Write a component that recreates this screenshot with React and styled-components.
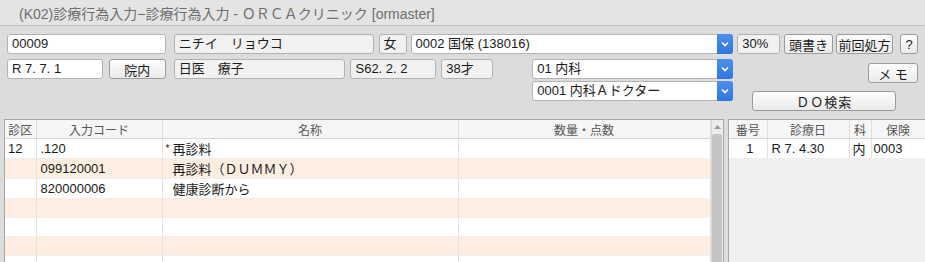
import React from 'react';
import styled, { createGlobalStyle } from 'styled-components';

const GlobalStyle = createGlobalStyle`
  html, body {
    margin: 0;
    padding: 0;
    background: #dcdcdc;
  }
  body {
    font-family: "Liberation Sans", "Noto Sans CJK JP", sans-serif;
    font-size: 13px;
    color: #1a1a1a;
  }
`;

const Window = styled.div`
  width: 925px;
  height: 262px;
  overflow: hidden;
  background: #dcdcdc;
  display: flex;
  flex-direction: column;
`;

const TitleBar = styled.div`
  height: 26px;
  box-sizing: border-box;
  background: #e4e4e4;
  border-bottom: 1px solid #c2c2c2;
  padding-left: 19px;
  display: flex;
  align-items: center;
  font-size: 14px;
  color: #6e6e6e;
  white-space: nowrap;
`;

const Form = styled.div`
  padding: 8px 7px 0 7px;
  display: flex;
  flex-direction: column;
`;

const Row = styled.div`
  display: flex;
  align-items: flex-start;
  gap: ${p => p.gap || 0}px;
`;

const Field = styled.div`
  box-sizing: border-box;
  width: ${p => p.w}px;
  height: 20px;
  margin-left: ${p => p.ml || 0}px;
  padding: 0 4px;
  line-height: 18px;
  background: ${p => (p.readonly ? '#f1f1f1' : '#ffffff')};
  border: 1px solid #b3b3b3;
  border-radius: 3px;
  white-space: nowrap;
  overflow: hidden;
`;

const Button = styled.div`
  box-sizing: border-box;
  width: ${p => p.w}px;
  height: ${p => p.h || 20}px;
  margin-left: ${p => p.ml || 0}px;
  margin-top: ${p => p.mt || 0}px;
  display: flex;
  align-items: center;
  justify-content: center;
  background: linear-gradient(#fdfdfd, #eaeaea);
  border: 1px solid #9c9c9c;
  border-radius: 3px;
  white-space: nowrap;
  letter-spacing: ${p => p.spacing || 0}px;
`;

const Select = styled.div`
  box-sizing: border-box;
  width: ${p => p.w}px;
  height: ${p => p.h || 20}px;
  margin-left: ${p => p.ml || 0}px;
  display: flex;
  background: #fff;
  border: 1px solid #b3b3b3;
  border-radius: 3px;
`;

const SelectText = styled.div`
  flex: 1;
  padding: 0 4px;
  line-height: ${p => p.lh || 18}px;
  white-space: nowrap;
  overflow: hidden;
`;

const SelectArrow = styled.div`
  width: 16px;
  margin: -1px -1px -1px 0;
  background: linear-gradient(#4b90ee, #2f76df);
  border-radius: 0 3px 3px 0;
  display: flex;
  align-items: center;
  justify-content: center;
`;

const SelectStack = styled.div`
  display: flex;
  flex-direction: column;
  gap: 2px;
  margin-left: ${p => p.ml || 0}px;
`;

const RightStack = styled.div`
  width: 166px;
  margin-left: 19px;
  display: flex;
  flex-direction: column;
  align-items: flex-end;
`;

const Tables = styled.div`
  margin-top: 8px;
  flex: 1;
  display: flex;
  gap: 4px;
  padding-left: 4px;
  min-height: 0;
`;

const Panel = styled.div`
  box-sizing: border-box;
  width: ${p => p.w}px;
  border: 1px solid #a6a6a6;
  border-bottom: none;
  border-right: ${p => (p.open ? 'none' : '1px solid #a6a6a6')};
  background: ${p => p.bg || '#fff'};
  display: flex;
  overflow: hidden;
`;

const Grid = styled.table`
  border-collapse: collapse;
  table-layout: fixed;
  width: ${p => p.w}px;
  align-self: flex-start;
`;

const Th = styled.th`
  height: 18px;
  padding: 0;
  font-weight: normal;
  font-size: 12px;
  color: #555;
  background: #f6f6f6;
  border-right: 1px solid #dedede;
  border-bottom: 1px solid #d6d6d6;
  text-align: center;
  white-space: nowrap;
`;

const Tr = styled.tr`
  background: ${p => (p.alt ? '#fdeee1' : '#ffffff')};
`;

const Td = styled.td`
  height: 18px;
  padding: 0 0 0 ${p => p.pl || 4}px;
  border-right: 1px solid #e2e2e2;
  border-bottom: 1px solid #eeeeee;
  text-align: ${p => p.align || 'left'};
  white-space: nowrap;
  overflow: hidden;
`;

const Star = styled.span`
  font-size: 10px;
  vertical-align: 2px;
  margin-right: 3px;
`;

const Scrollbar = styled.div`
  width: 13px;
  background: #ececec;
  border-left: 1px solid #d8d8d8;
  display: flex;
  flex-direction: column;
  align-items: center;
`;

const ScrollArrow = styled.div`
  height: 14px;
  display: flex;
  align-items: center;
`;

const Thumb = styled.div`
  flex: 1;
  width: 10px;
  margin-top: 0;
  background: #c4c4c4;
  border-radius: 2px 2px 0 0;
`;

const Chevron = () => (
  <svg width="8" height="6" viewBox="0 0 8 6">
    <polyline points="1,1.5 4,4.5 7,1.5" fill="none" stroke="#fff" strokeWidth="1.6" />
  </svg>
);

const DropDown = ({ w, children }) => (
  <Select w={w}>
    <SelectText>{children}</SelectText>
    <SelectArrow>
      <Chevron />
    </SelectArrow>
  </Select>
);

const orders = [
  { ku: '12', code: '.120', name: '再診料', star: true },
  { ku: '', code: '099120001', name: '再診料（ＤＵＭＭＹ）' },
  { ku: '', code: '820000006', name: '健康診断から' },
  {}, {}, {}, {},
];

export default function App() {
  return (
    <Window>
      <GlobalStyle />
      <TitleBar>(K02)診療行為入力−診療行為入力 - ＯＲＣＡクリニック [ormaster]</TitleBar>
      <Form>
        <Row>
          <Field w={159}>00009</Field>
          <Field w={200} ml={8} readonly>ニチイ　リョウコ</Field>
          <Field w={28} ml={5} readonly>女</Field>
          <Select w={323} ml={4}>
            <SelectText>0002 国保 (138016)</SelectText>
            <SelectArrow><Chevron /></SelectArrow>
          </Select>
          <Field w={43} ml={4} readonly>30%</Field>
          <Button w={49} ml={4}>頭書き</Button>
          <Button w={57} ml={3}>前回処方</Button>
          <Button w={18} ml={7}>?</Button>
        </Row>
        <Row style={{ marginTop: 5 }}>
          <Field w={96}>R 7. 7. 1</Field>
          <Button w={57} ml={6}>院内</Button>
          <Field w={172} ml={8} readonly>日医　療子</Field>
          <Field w={86} ml={5} readonly>S62. 2. 2</Field>
          <Field w={52} ml={5} readonly>38才</Field>
          <SelectStack ml={39}>
            <DropDown w={201}>01 内科</DropDown>
            <DropDown w={201}>0001 内科Ａドクター</DropDown>
          </SelectStack>
          <RightStack>
            <Button w={50} mt={4}>メ モ</Button>
            <Button w={144} mt={8} spacing={1} style={{ alignSelf: 'flex-start' }}>ＤＯ検索</Button>
          </RightStack>
        </Row>
      </Form>
      <Tables>
        <Panel w={720}>
          <Grid w={705}>
            <colgroup>
              <col style={{ width: 31 }} />
              <col style={{ width: 126 }} />
              <col style={{ width: 296 }} />
              <col style={{ width: 252 }} />
            </colgroup>
            <thead>
              <tr>
                <Th>診区</Th>
                <Th>入力コード</Th>
                <Th>名称</Th>
                <Th>数量・点数</Th>
              </tr>
            </thead>
            <tbody>
              {orders.map((o, i) => (
                <Tr key={i} alt={i % 2 === 1}>
                  <Td pl={3}>{o.ku}</Td>
                  <Td>{o.code}</Td>
                  <Td pl={o.star ? 3 : 10}>
                    {o.star && <Star>*</Star>}
                    {o.name}
                  </Td>
                  <Td />
                </Tr>
              ))}
            </tbody>
          </Grid>
          <Scrollbar>
            <ScrollArrow>
              <svg width="7" height="4" viewBox="0 0 7 4">
                <polygon points="0,4 3.5,0 7,4" fill="#9a9a9a" />
              </svg>
            </ScrollArrow>
            <Thumb />
          </Scrollbar>
        </Panel>
        <Panel w={197} bg="#f0f0f0" open>
          <Grid w={196}>
            <colgroup>
              <col style={{ width: 38 }} />
              <col style={{ width: 82 }} />
              <col style={{ width: 22 }} />
              <col style={{ width: 54 }} />
            </colgroup>
            <thead>
              <tr>
                <Th>番号</Th>
                <Th>診療日</Th>
                <Th>科</Th>
                <Th>保険</Th>
              </tr>
            </thead>
            <tbody>
              <Tr>
                <Td align="center" pl={0}>1</Td>
                <Td>R 7. 4.30</Td>
                <Td pl={3}>内</Td>
                <Td pl={2}>0003</Td>
              </Tr>
            </tbody>
          </Grid>
        </Panel>
      </Tables>
    </Window>
  );
}
